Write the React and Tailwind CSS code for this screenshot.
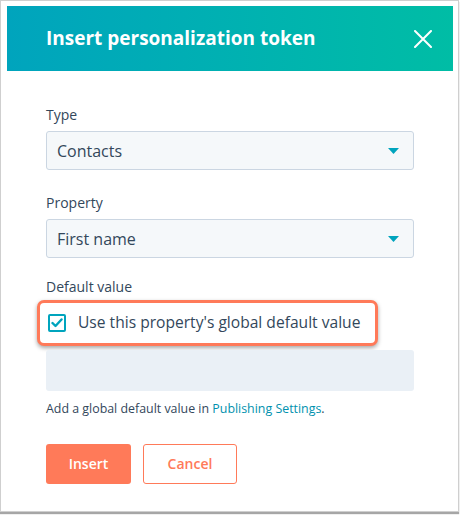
import React from 'react'

const Caret = () => (
  <svg width="11" height="6" viewBox="0 0 11 6" className="shrink-0">
    <path d="M0 0 H11 L5.5 6 Z" fill="#00a4bd" />
  </svg>
)

const SelectBox = ({ value }) => (
  <div className="mt-[7px] flex h-[39px] items-center justify-between rounded-[3px] border border-[#cbd6e2] bg-[#f5f8fa] pl-[10px] pr-[14px] text-[16px] text-[#33475b]">
    <span>{value}</span>
    <Caret />
  </div>
)

const App = () => {
  return (
    <div className="h-[515px] w-[460px] bg-white" style={{ fontFamily: '"Open Sans", Lato, sans-serif' }}>
      <div className="h-[512px] w-[459px] border border-[#cfcfcf] bg-white pt-[5px] pl-[6px] pr-[5px] shadow-[0_2px_1px_rgba(0,0,0,0.35)]">
        <div className="flex h-[65px] items-center justify-between bg-gradient-to-r from-[#00a4bd] to-[#00bda5] pl-[39px] pr-[21px]">
          <h1 className="text-[19px] font-bold text-white">Insert personalization token</h1>
          <svg width="18" height="18" viewBox="0 0 18 18">
            <path d="M1 1 L17 17 M17 1 L1 17" stroke="white" strokeWidth="2" strokeLinecap="round" />
          </svg>
        </div>

        <div className="px-[39px] pt-[35px] text-[#33475b]">
          <label className="block text-[14px] leading-[18px]">Type</label>
          <SelectBox value="Contacts" />

          <label className="mt-[24px] block text-[14px] leading-[18px]">Property</label>
          <SelectBox value="First name" />

          <label className="mt-[20px] block text-[14px] leading-[18px]">Default value</label>

          <div className="-ml-[9px] mt-[4px] flex h-[46px] w-[341px] items-center gap-[12px] rounded-[7px] border-[3px] border-[#ff7a59] bg-white pl-[8px] shadow-[0_2px_4px_rgba(0,0,0,0.35)]">
            <span className="flex h-[18px] w-[18px] items-center justify-center rounded-[2px] border-2 border-[#00a4bd] bg-white">
              <svg width="12" height="10" viewBox="0 0 12 10">
                <path d="M1.5 5 L4.5 8 L10.5 1.5" stroke="#00a4bd" strokeWidth="2.4" fill="none" strokeLinecap="round" strokeLinejoin="round" />
              </svg>
            </span>
            <span className="text-[15.6px]">Use this property's global default value</span>
          </div>

          <div className="mt-[4px] h-[41px] rounded-[3px] bg-[#eaf0f6]" />

          <p className="mt-[9px] text-[12.4px]">
            Add a global default value in <span className="text-[#0091ae]">Publishing Settings</span>.
          </p>

          <div className="mt-[25px] flex gap-[12px]">
            <button className="h-[40px] w-[85px] rounded-[3px] bg-[#ff7a59] text-[14px] font-semibold text-white">Insert</button>
            <button className="h-[40px] w-[94px] rounded-[3px] border border-[#ff7a59] bg-white text-[14px] font-semibold text-[#ff7a59]">Cancel</button>
          </div>
        </div>
      </div>
    </div>
  )
}

export default App
